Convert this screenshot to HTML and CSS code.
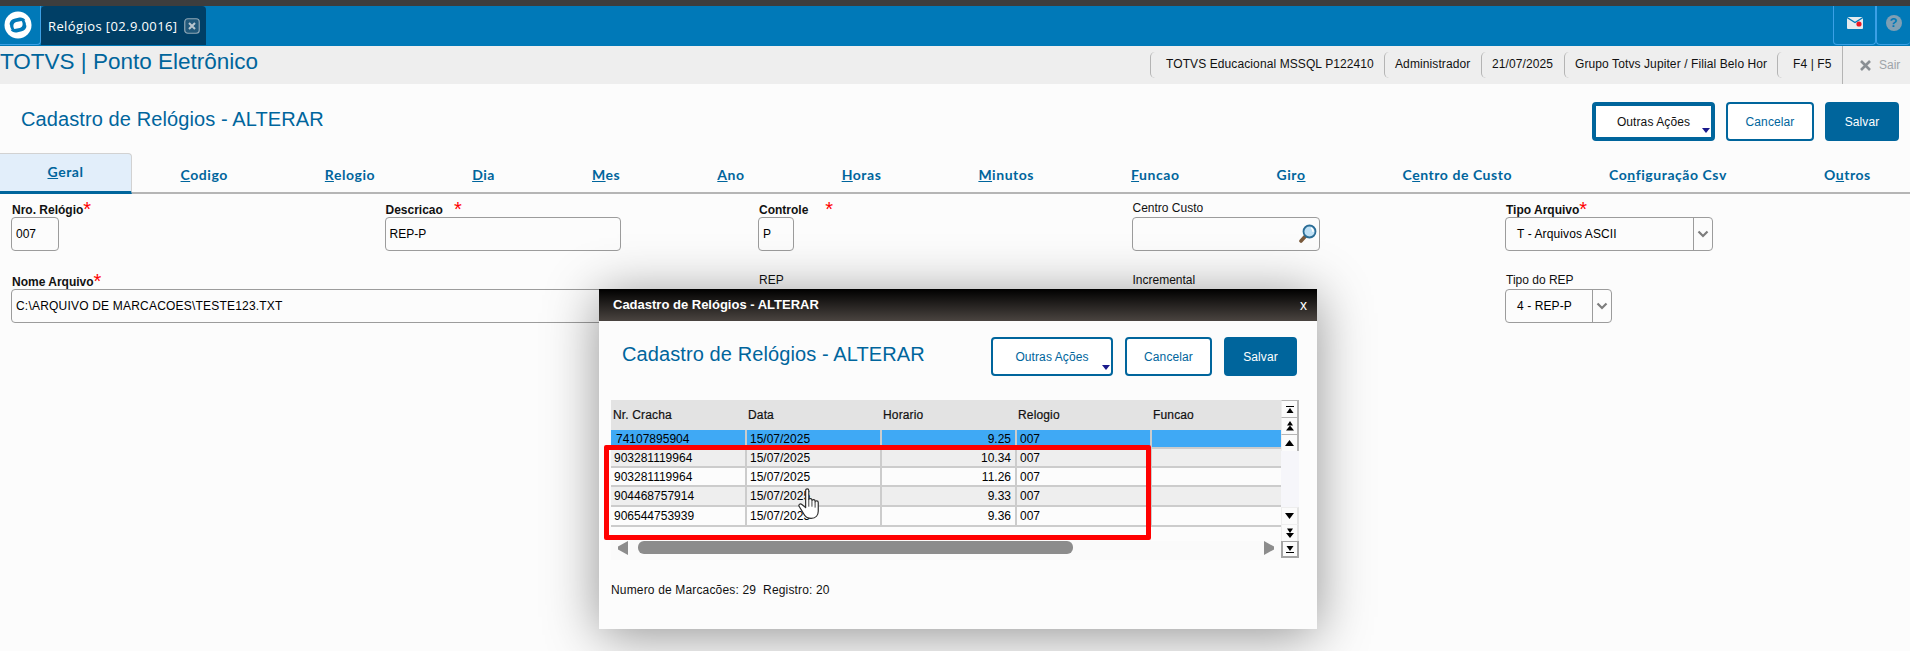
FILE: index.html
```html
<!DOCTYPE html>
<html lang="pt-BR">
<head>
<meta charset="utf-8">
<title>TOTVS | Ponto Eletrônico</title>
<link rel="stylesheet" href="styles.css">
</head>
<body>
<div class="topstrip"></div>
<div class="tabbar">
  <div class="logo-tile">
    <svg width="28" height="28" viewBox="0 0 28 28"><circle cx="14" cy="14" r="13.5" fill="#fff"/><path d="M5.500 13.600c0-2.800 1.900-5.300 4.700-5.900l5.100-1.100c2.600-.4 4.900 .6 6.100 2.700l-9.100 1.800c-1.800 .3-2.800 1.600-2.900 3.400-.1 1.300 .2 2.500 1 3.500l-1.500 1.900c-1.800-1.400-2.900-3.600-2.900-6.300z" fill="#0079b8"/><path d="M22.500 14.400c0 2.800-1.900 5.300-4.700 5.900l-5.100 1.100c-2.600 .4-4.900-.6-6.100-2.700l9.100-1.800c1.800-.3 2.800-1.600 2.900-3.400 .1-1.300-.2-2.500-1-3.500l1.500-1.900c1.800 1.400 2.900 3.600 2.900 6.300z" fill="#0079b8"/></svg>
  </div>
  <div class="app-tab">
    <span>Relógios [02.9.0016]</span>
    <svg class="app-tab-close" width="16" height="16" viewBox="0 0 16 16"><rect x=".75" y=".75" width="14.500" height="14.500" rx="3" fill="#21587a" stroke="#8fa6b5" stroke-width="1.200"/><path d="M5 5l6 6M11 5l-6 6" stroke="#b9c6cf" stroke-width="2"/></svg>
  </div>
  <div class="tabbar-fill"></div>
  <div class="tile tile-mail">
    <svg width="16" height="12" viewBox="0 0 16 12"><rect width="16" height="12" rx="1" fill="#e4ebef"/><path d="M0 .5l8 5 8-5" fill="none" stroke="#0079b8" stroke-width="1.300"/><circle cx="12" cy="7" r="2.600" fill="#f01622"/></svg>
  </div>
  <div class="tile tile-help"><span class="help-dot">?</span></div>
</div>
<header class="sysbar">
  <div class="brand">TOTVS | Ponto Eletrônico</div>
  <div class="sysinfo">
    <div class="sys-item sys-a">TOTVS Educacional MSSQL P122410</div>
    <div class="sys-item sys-b">Administrador</div>
    <div class="sys-item sys-c">21/07/2025</div>
    <div class="sys-item sys-d">Grupo Totvs Jupiter / Filial Belo Hor</div>
    <div class="sys-item sys-e">F4 | F5</div>
    <div class="sys-exit">
      <svg width="13" height="13" viewBox="0 0 13 13"><path d="M2 2l9 9M11 2l-9 9" stroke="#8a8f94" stroke-width="2.600"/></svg>
      <span>Sair</span>
    </div>
  </div>
</header>
<main>
  <div class="page-head">
    <h1 class="page-title">Cadastro de Relógios - ALTERAR</h1>
    <div class="actions">
      <button class="btn btn-more btn-focus">Outras Ações<i class="caret"></i></button>
      <button class="btn btn-cancel btn-cancel-w">Cancelar</button>
      <button class="btn btn-save btn-save-w">Salvar</button>
    </div>
  </div>
  <nav class="tabs">
    <a class="tab tab-active"><u>G</u>eral</a>
    <a class="tab"><u>C</u>odigo</a>
    <a class="tab"><u>R</u>elogio</a>
    <a class="tab"><u>D</u>ia</a>
    <a class="tab"><u>M</u>es</a>
    <a class="tab"><u>A</u>no</a>
    <a class="tab"><u>H</u>oras</a>
    <a class="tab"><u>M</u>inutos</a>
    <a class="tab"><u>F</u>uncao</a>
    <a class="tab">Gir<u>o</u></a>
    <a class="tab">C<u>e</u>ntro de Custo</a>
    <a class="tab">Co<u>n</u>figuração Csv</a>
    <a class="tab">O<u>u</u>tros</a>
  </nav>
  <section class="form">
    <div class="field">
      <label class="lbl lbl-req">Nro. Relógio<b class="star">*</b></label>
      <div class="input w-nro">007</div>
    </div>
    <div class="field">
      <label class="lbl lbl-req">Descricao<b class="star star-far">*</b></label>
      <div class="input w-desc">REP-P</div>
    </div>
    <div class="field">
      <label class="lbl lbl-req">Controle<b class="star star-far2">*</b></label>
      <div class="input w-ctrl">P</div>
    </div>
    <div class="field">
      <label class="lbl">Centro Custo</label>
      <div class="input w-cc">
        <svg class="lupa" width="18" height="20" viewBox="0 0 18 20"><path d="M7 11.500L2 17" stroke="#7a5a3c" stroke-width="3.600" stroke-linecap="round"/><circle cx="10.500" cy="7.500" r="6" fill="#bfe0f5" stroke="#2b6d96" stroke-width="1.800"/><path d="M12 3.800a4 4 0 0 1 2 4" fill="none" stroke="#fff" stroke-width="1.500"/></svg>
      </div>
    </div>
    <div class="field">
      <label class="lbl lbl-req">Tipo Arquivo<b class="star">*</b></label>
      <div class="select w-tipo"><span class="select-val">T - Arquivos ASCII</span><span class="select-arrow"><svg width="12" height="8" viewBox="0 0 12 8"><path d="M1.500 1.500L6 6l4.500-4.500" fill="none" stroke="#7d7d7d" stroke-width="2.200"/></svg></span></div>
    </div>
    <div class="field field-wide">
      <label class="lbl lbl-req">Nome Arquivo<b class="star">*</b></label>
      <div class="input w-nome">C:\ARQUIVO DE MARCACOES\TESTE123.TXT</div>
    </div>
    <div class="field">
      <label class="lbl">REP</label>
    </div>
    <div class="field">
      <label class="lbl">Incremental</label>
    </div>
    <div class="field">
      <label class="lbl">Tipo do REP</label>
      <div class="select w-rep"><span class="select-val">4 - REP-P</span><span class="select-arrow"><svg width="12" height="8" viewBox="0 0 12 8"><path d="M1.500 1.500L6 6l4.500-4.500" fill="none" stroke="#7d7d7d" stroke-width="2.200"/></svg></span></div>
    </div>
  </section>
</main>

<div class="modal">
  <div class="modal-bar"><span>Cadastro de Relógios - ALTERAR</span><span class="modal-x">x</span></div>
  <div class="modal-head">
    <h2 class="page-title">Cadastro de Relógios - ALTERAR</h2>
    <div class="actions actions-modal">
      <button class="btn btn-more btn-more-blue">Outras Ações<i class="caret"></i></button>
      <button class="btn btn-cancel">Cancelar</button>
      <button class="btn btn-save">Salvar</button>
    </div>
  </div>
  <div class="grid-wrap">
    <div class="grid-main">
      <table class="grid">
        <thead>
          <tr><th>Nr. Cracha</th><th>Data</th><th>Horario</th><th>Relogio</th><th>Funcao</th></tr>
        </thead>
        <tbody>
          <tr class="r-sel"><td class="first">74107895904</td><td>15/07/2025</td><td class="num">9.25</td><td>007</td><td></td></tr>
          <tr class="r-alt"><td>903281119964</td><td>15/07/2025</td><td class="num">10.34</td><td>007</td><td></td></tr>
          <tr><td>903281119964</td><td>15/07/2025</td><td class="num">11.26</td><td>007</td><td></td></tr>
          <tr class="r-alt r-tall"><td>904468757914</td><td>15/07/2025</td><td class="num">9.33</td><td>007</td><td></td></tr>
          <tr class="r-tall"><td>906544753939</td><td>15/07/2025</td><td class="num">9.36</td><td>007</td><td></td></tr>
        </tbody>
      </table>
      <div class="hscroll">
        <svg width="11" height="14" viewBox="0 0 11 14"><path d="M11 0v14L1 8.500V5.500z" fill="#8c8c8c"/></svg>
        <div class="hscroll-track"><div class="hscroll-thumb"></div></div>
        <svg width="11" height="14" viewBox="0 0 11 14"><path d="M0 0v14l10-5.500V5.500z" fill="#8c8c8c"/></svg>
      </div>
    </div>
    <div class="vscroll">
      <div class="vbtn"><svg width="8" height="7" viewBox="0 0 8 7"><path d="M0 .5h8" stroke="#000"/><path d="M4 2l3.500 5h-7z"/></svg></div>
      <div class="vbtn"><svg width="8" height="10" viewBox="0 0 8 10"><path d="M4 0l3 4.500H1zM4 4.500l4 5H0z"/></svg></div>
      <div class="vbtn"><svg width="9" height="6" viewBox="0 0 9 6"><path d="M4.500 0L9 6H0z"/></svg></div>
      <div class="vtrack"></div>
      <div class="vbtn vbtn-soft"><svg width="9" height="6" viewBox="0 0 9 6"><path d="M4.500 6L9 0H0z"/></svg></div>
      <div class="vbtn vbtn-soft"><svg width="8" height="10" viewBox="0 0 8 10"><path d="M4 5L1 .5h6zM4 10L0 5h8z"/></svg></div>
      <div class="vbtn vbtn-end"><svg width="8" height="7" viewBox="0 0 8 7"><path d="M0 6.500h8" stroke="#000"/><path d="M4 5L.5 0h7z"/></svg></div>
    </div>
  </div>
  <p class="modal-foot">Numero de Marcacões: 29 &nbsp;Registro: 20</p>
  <div class="red-box"></div>
  <svg class="hand" width="27" height="34" viewBox="0 0 30 36"><path d="M8.500 3c0-2.500 3.500-2.500 3.500 0v10c0-1.500 3.500-1.500 3.500 .5v1c0-1.800 3.500-1.800 3.500 .3v1c0-1.800 3.500-1.800 3.500 .4V26c0 4-2.500 8-8 8-4 0-6-1.500-7.500-4L1.500 21c-1.500-2 .8-4 2.800-2.500l4.200 3.500z" fill="#fff" stroke="#2a2a2a" stroke-width="1.300" stroke-linejoin="round"/><path d="M12 13v8M15.500 15v6M19 16v6" stroke="#2a2a2a" stroke-width="1"/></svg>
</div>
</body>
</html>
```
FILE: styles.css
```css
* { box-sizing: border-box; }
html, body { margin: 0; padding: 0; }
body {
  width: 1910px;
  height: 651px;
  overflow: hidden;
  position: relative;
  background: #fcfcfc;
  font: 12px "Liberation Sans", Arial, sans-serif;
  color: #000;
}
.topstrip { height: 6px; background: #3d3d3d; }

.tabbar { height: 40px; background: #0079b8; display: flex; align-items: stretch; }
.logo-tile {
  width: 41px; height: 39px;
  border: 1px solid #3ba0e6; border-top: 0; border-left: 0;
  border-radius: 0 0 4px 0;
  display: flex; align-items: center; justify-content: center;
  padding-right: 4px;
}
.app-tab {
  width: 165px; height: 39px;
  background: #003f66;
  border-radius: 4px 4px 0 0;
  color: #fff;
  display: flex; align-items: center; gap: 6px;
  padding-left: 7px;
  font: 13px "Open Sans", sans-serif;
  letter-spacing: .4px;
  white-space: nowrap;
}
.app-tab-close { flex: none; }
.tabbar-fill { flex: 1; }
.tile {
  height: 39px;
  border: 1px solid #3ba0e6; border-top: 0;
  border-radius: 0 0 4px 4px;
  display: flex; align-items: center; justify-content: center;
  padding-bottom: 4px;
}
.tile-mail { width: 43px; }
.tile-help { width: 34px; border-right: 0; }
.help-dot {
  width: 16px; height: 16px; border-radius: 50%;
  background: #7e9fb4; color: #0079b8;
  font: bold 13px/16px "Liberation Sans", sans-serif;
  text-align: center;
}

.sysbar { height: 38px; background: #eee; display: flex; justify-content: space-between; align-items: stretch; }
.brand { font-size: 22.500px; line-height: 32px; color: #00659c; white-space: nowrap; }
.sysinfo { display: flex; align-items: center; }
.sys-item {
  height: 26px; line-height: 25px;
  border-left: 1px solid #b4b4b4;
  border-radius: 5px 0 0 5px;
  white-space: nowrap;
  color: #111;
  letter-spacing: .1px;
}
.sys-a { width: 234px; padding-left: 15px; }
.sys-b { width: 97px; padding-left: 10px; }
.sys-c { width: 83px; padding-left: 10px; }
.sys-d { width: 213px; padding-left: 10px; }
.sys-e { width: 65px; padding-left: 15px; }
.sys-exit {
  width: 68px; height: 38px;
  border-left: 1px solid #b4b4b4;
  display: flex; align-items: center; gap: 7px;
  padding-left: 16px;
  color: #9ea4a9;
}

.page-head { height: 69px; display: flex; justify-content: space-between; padding: 18px 11px 0 21px; }
.page-title {
  margin: 0;
  font-weight: normal; font-size: 20px; line-height: 34px;
  color: #00659c; white-space: nowrap;
  letter-spacing: .1px;
}
.actions { display: flex; gap: 11px; align-items: flex-start; }
.actions-modal { gap: 12px; }
.btn {
  position: relative;
  height: 39px; width: 87px;
  border: 2px solid #00659c; border-radius: 4px;
  background: #fff;
  font: 12px "Liberation Sans", sans-serif;
  letter-spacing: .1px;
  padding: 0;
}
.btn-more { width: 122px; }
.btn-focus { width: 123px; border-width: 4px; color: #111; }
.btn-more-blue { color: #00659c; }
.btn-cancel { color: #00659c; }
.btn-cancel-w { width: 88px; }
.btn-save { width: 73px; background: #00659c; color: #fff; }
.btn-save-w { width: 74px; }
.caret {
  position: absolute; right: 1px; bottom: 4px;
  border: 4px solid transparent; border-top: 5px solid #1a1a8c; border-bottom: 0;
}

.tabs {
  height: 41px;
  display: flex;
  border-bottom: 2px solid #b5b5b5;
  color: #00659c;
  font: bold 14px "Lato", sans-serif;
  letter-spacing: .55px;
}
.tab { padding: 0 48.500px; height: 39px; line-height: 44px; white-space: nowrap; }
.tab-active {
  padding: 0 47.500px;
  height: 41px; line-height: 36px;
  background: #e2eefa;
  border: 1px solid #d2d2d2; border-left: 0; border-bottom: 3px solid #00659c;
  border-radius: 0 4px 0 0;
}

.form {
  display: grid;
  grid-template-columns: repeat(5, 373.500px);
  grid-auto-rows: 48px;
  row-gap: 24px;
  padding: 9px 0 0 12px;
}
.field-wide { grid-column: span 2; }
.lbl { display: block; height: 14px; line-height: 10px; white-space: nowrap; color: #111; }
.lbl-req { font-weight: bold; line-height: 14px; }
.star { color: #f00; font-size: 20px; line-height: 10px; font-weight: normal; vertical-align: -2px; }
.star-far { margin-left: 11px; }
.star-far2 { margin-left: 17px; }
.input, .select {
  height: 34px;
  margin-left: -1px;
  border: 1px solid #9c9c9c; border-radius: 4px;
  line-height: 32px;
  background: #fcfcfc;
  white-space: nowrap;
}
.input { padding-left: 4px; }
.w-nro { width: 48px; }
.w-desc { width: 236px; }
.w-ctrl { width: 36px; }
.w-cc { width: 188px; display: flex; justify-content: flex-end; align-items: center; padding-right: 2px; }
.w-nome { width: 620px; letter-spacing: .2px; }
.select { display: flex; }
.select-val { flex: 1; padding-left: 11px; letter-spacing: .1px; }
.select-arrow { width: 19px; border-left: 1px solid #9c9c9c; display: flex; align-items: center; justify-content: center; }
.w-tipo { width: 208px; }
.w-rep { width: 107px; }

.modal {
  position: absolute; left: 599px; top: 289px;
  width: 718px; height: 340px;
  background: #fcfcfc;
  box-shadow: 0 6px 50px rgba(0,0,0,.42);
}
.modal-bar {
  height: 32px;
  background: linear-gradient(#000, #4a4440);
  color: #fff;
  font-weight: bold; font-size: 13px; line-height: 31px;
  padding: 0 10px 0 14px;
  display: flex; justify-content: space-between;
}
.modal-x { font-weight: normal; font-size: 14px; line-height: 33px; }
.modal-head { height: 79px; display: flex; justify-content: space-between; padding: 16px 20px 0 23px; }
.grid-wrap { display: flex; padding-left: 12px; }
.grid-main { width: 670px; }
.grid { width: 669px; height: 141px; border-collapse: collapse; table-layout: fixed; }
.grid th {
  height: 30px; background: #e3e3e3;
  font-weight: normal; text-align: left;
  padding: 0 0 0 2px;
  color: #111;
  width: 135px;
  letter-spacing: .15px;
  -webkit-text-stroke: .2px #111;
}
.grid td {
  height: 19px; padding: 1px 0 0 3px;
  border-right: 2px solid #ccc; border-bottom: 2px solid #ccc;
  line-height: 15px;
  white-space: nowrap;
}
.grid td:last-child { border-right: 0; }
.grid .first { padding-left: 5px; }
.grid .num { text-align: right; padding-right: 4px; }
.r-sel td { background: #3fa9f5; height: 18px; }
.r-alt td { background: #eee; }
.r-tall td { height: 20px; }
.grid tr:last-child td { height: 20px; }
.grid tbody::after { content: ""; display: table-row; height: 15px; }

.hscroll { height: 19px; display: flex; padding: 0 6px 5px 6px; align-items: flex-start; background: #fafafa; }
.hscroll-track { flex: 1; padding-left: 10px; }
.hscroll-thumb { width: 435px; height: 13px; background: #8c8c8c; border-radius: 6px; }

.vscroll { width: 18px; height: 158px; display: flex; flex-direction: column; }
.vbtn {
  height: 17px;
  background: #fbfbfb;
  border: 1px solid #b5b5b5; border-left-color: #eee;
  border-width: 1px 2px 0 1px;
  display: flex; align-items: center; justify-content: center;
}
.vbtn-soft { border-color: #eee; border-right-color: #e4e4e4; }
.vbtn-end { border-color: #a5a5a5; border-width: 1px 2px 2px 2px; }
.vtrack { flex: 1; background: #f6f6fa; }

.modal-foot { margin: 0; position: absolute; left: 12px; top: 294px; line-height: 14px; white-space: pre; color: #111; letter-spacing: .16px; }
.red-box {
  position: absolute; left: 5px; top: 156px;
  width: 547px; height: 95px;
  border: 5px solid #f00; border-radius: 2px;
}
.hand { position: absolute; left: 199px; top: 198px; }
```
